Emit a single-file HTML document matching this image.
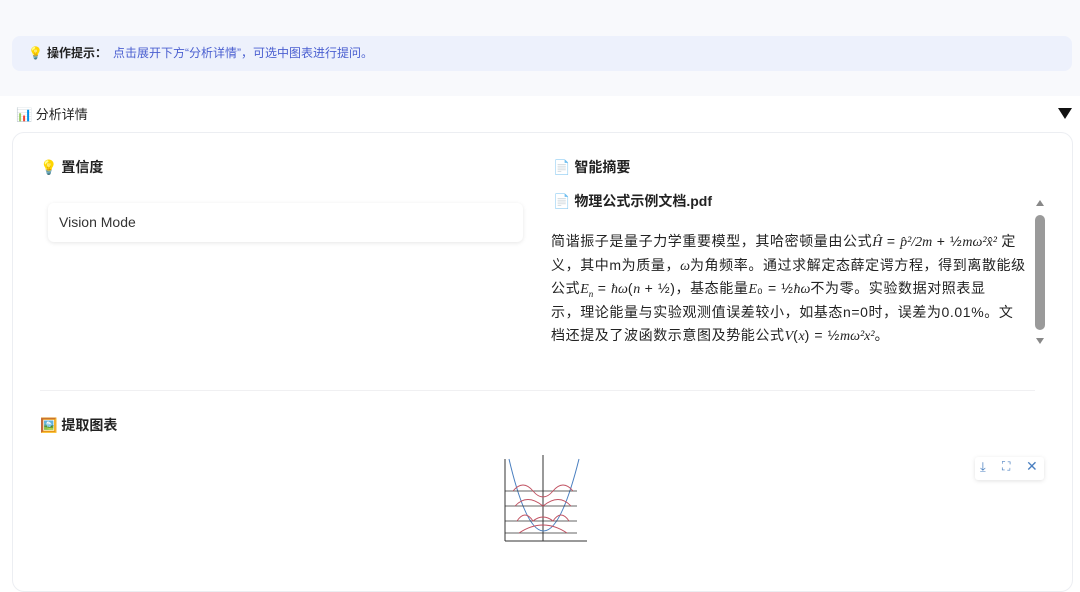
<!DOCTYPE html>
<html><head><meta charset="utf-8"><style>
*{box-sizing:border-box;margin:0;padding:0}
body{width:1080px;height:563px;overflow:hidden;background:#fff;font-family:"Liberation Sans","Noto Sans CJK SC",sans-serif;color:#222;position:relative}
.top{position:absolute;left:0;top:0;width:1080px;height:96px;background:#f8f9fc}
.tip{position:absolute;left:12px;top:36px;width:1060px;height:35px;background:#edf1fc;border-radius:8px;font-size:12px;line-height:35px;padding-left:16px}
.tip b{color:#222;margin-left:4px}
.tip span{color:#4a5fd0;margin-left:6px}
.sec{position:absolute;left:16px;top:106px;font-size:13px;line-height:18px}
.tri{position:absolute;right:8px;top:108px;width:0;height:0;border-left:7px solid transparent;border-right:7px solid transparent;border-top:11px solid #111}
.card{position:absolute;left:12px;top:132px;width:1061px;height:460px;border:1px solid #eceef2;border-radius:12px}
.h{position:absolute;font-size:14px;font-weight:bold;line-height:20px}
.vm{position:absolute;left:48px;top:203px;width:475px;height:39px;border-radius:6px;box-shadow:0 1px 4px rgba(0,0,0,.1);font-size:14px;line-height:39px;padding-left:11px;color:#333}
.txt{position:absolute;left:551px;top:230px;width:484px;font-size:14px;line-height:23.6px;color:#222;white-space:nowrap;letter-spacing:.6px}
.txt div{height:23.6px}
.txt i{font-family:"Liberation Serif",serif;font-size:14px;letter-spacing:0}
.txt sub{font-size:9px;line-height:0}
.sb{position:absolute;left:1035px;top:215px;width:10px;height:115px;background:#9a9a9a;border-radius:5px}
.ar{position:absolute;left:1036px;width:0;height:0;border-left:4px solid transparent;border-right:4px solid transparent}
.div{position:absolute;left:40px;top:390px;width:995px;height:1px;background:#f0f0f2}
.icons{position:absolute;left:975px;top:457px;width:69px;height:23px;box-shadow:0 1px 4px rgba(0,0,0,.12);border-radius:3px;background:#fff}
</style></head><body>
<div class="top"></div>
<div class="tip">💡<b>操作提示：</b><span>点击展开下方“分析详情”，可选中图表进行提问。</span></div>
<div class="sec">📊 分析详情</div>
<div class="tri"></div>
<div class="card"></div>
<div class="h" style="left:40px;top:157px">💡 置信度</div>
<div class="vm">Vision Mode</div>
<div class="h" style="left:553px;top:157px">📄 智能摘要</div>
<div class="h" style="left:553px;top:191px">📄 物理公式示例文档.pdf</div>
<div class="txt">
<div>简谐振子是量子力学重要模型，其哈密顿量由公式<i>Ĥ</i> = <i>p̂²/2m</i> + ½<i>mω²x̂²</i> 定</div>
<div>义，其中m为质量，<i>ω</i>为角频率。通过求解定态薛定谔方程，得到离散能级</div>
<div>公式<i>E<sub>n</sub></i> = <i>ħω</i>(<i>n</i> + ½)，基态能量<i>E</i>₀ = ½<i>ħω</i>不为零。实验数据对照表显</div>
<div>示，理论能量与实验观测值误差较小，如基态n=0时，误差为0.01%。文</div>
<div>档还提及了波函数示意图及势能公式<i>V</i>(<i>x</i>) = ½<i>mω²x²</i>。</div>
</div>
<div class="ar" style="top:200px;border-bottom:6px solid #888"></div>
<div class="sb"></div>
<div class="ar" style="top:338px;border-top:6px solid #888"></div>
<div class="div"></div>
<div class="h" style="left:40px;top:415px">🖼️ 提取图表</div>
<svg style="position:absolute;left:497px;top:453px" width="94" height="96" viewBox="0 0 94 96">
<rect width="94" height="96" fill="#fff"/>
<line x1="8" y1="6" x2="8" y2="88" stroke="#333"/><line x1="8" y1="88" x2="90" y2="88" stroke="#333"/>
<line x1="46" y1="2" x2="46" y2="88" stroke="#333"/>
<path d="M12 6 Q46 150 82 6" fill="none" stroke="#4a7fc0"/>
<g stroke="#333" stroke-width=".8"><line x1="8" y1="38" x2="80" y2="38"/><line x1="8" y1="53" x2="80" y2="53"/><line x1="8" y1="68" x2="80" y2="68"/><line x1="8" y1="80" x2="80" y2="80"/></g>
<g fill="none" stroke="#c05060" stroke-width=".9"><path d="M16 38 Q26 26 36 38 Q46 50 56 38 Q66 26 76 38"/><path d="M18 53 Q30 40 46 53 Q62 40 74 53"/><path d="M20 68 Q28 56 36 68 Q46 60 56 68 Q64 56 72 68"/><path d="M22 80 Q46 64 70 80"/></g>
</svg>
<div class="icons"><span style="position:absolute;left:5px;top:2px;font-size:13px;color:#4a7fc0">⤓</span><span style="position:absolute;left:27px;top:2px;font-size:12px;color:#4a7fc0">⛶</span><span style="position:absolute;left:51px;top:1px;font-size:14px;color:#4a7fc0">✕</span></div>
</body></html>
